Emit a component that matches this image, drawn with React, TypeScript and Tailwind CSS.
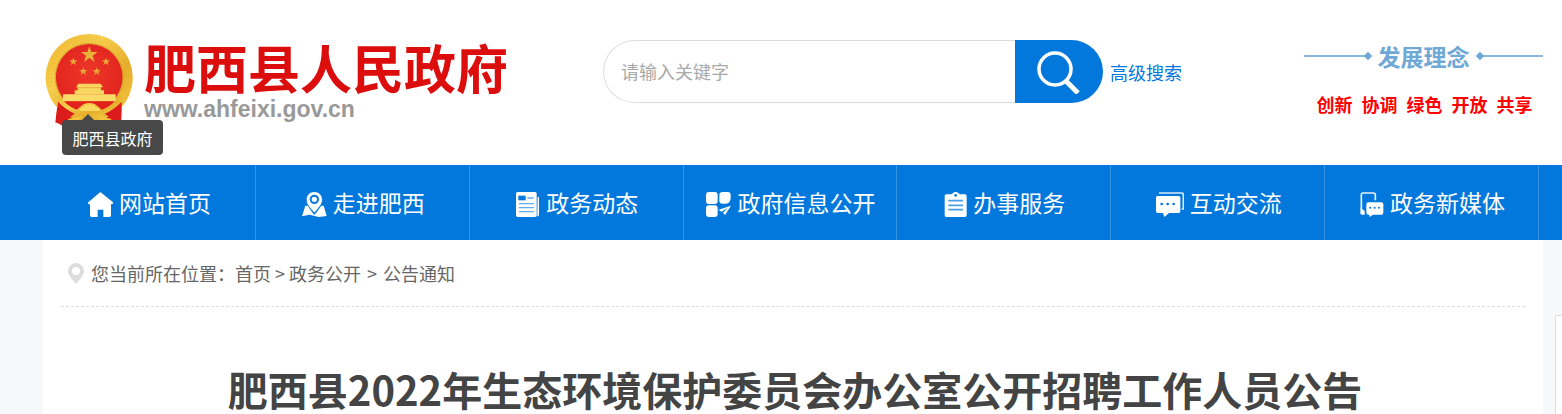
import {ReactNode} from "react";

const Emblem = () => (
 <svg viewBox="45 41 264 282" className="w-[88px] h-[94px] shrink-0" aria-hidden="true">
  <defs>
   <linearGradient id="gold" x1="0" y1="0" x2="1" y2="1">
    <stop offset="0" stopColor="#efb52c" />
    <stop offset="0.35" stopColor="#f6cf4d" />
    <stop offset="0.65" stopColor="#e6ae2c" />
    <stop offset="1" stopColor="#f5cd48" />
   </linearGradient>
   <radialGradient id="red" cx="0.5" cy="0.45" r="0.6">
    <stop offset="0" stopColor="#ee3628" />
    <stop offset="1" stopColor="#e0231e" />
   </radialGradient>
  </defs>
  <path d="M84 240 76 306 98 314 120 322H238L273 318 275 240Z" fill="#d81a1a" />
  <circle cx="177.5" cy="172" r="131" fill="url(#gold)" />
  <circle cx="177.5" cy="172" r="116" fill="none" stroke="#d9971c" strokeWidth="24" strokeDasharray="3 9" opacity="0.12" />
  <circle cx="177.5" cy="171" r="102" fill="none" stroke="#c98a1a" strokeWidth="3" opacity="0.6" />
  <circle cx="177.5" cy="171" r="100" fill="url(#red)" />
  <path
   d="M178 78 184 95H203L188 106 194 125 178 113 162 125 168 106 153 95H172Z"
   fill="#e9b03a"
  />
  {[
   [130, 124],
   [228, 124],
   [160, 153],
   [200, 153],
  ].map(([x, y]) => (
   <path
    key={`${x}-${y}`}
    transform={`translate(${x} ${y})`}
    d="M0-12 3-4H12L5 2 8 11 0 5-8 11-5 2-12-4H-3Z"
    fill="#e9a836"
   />
  ))}
  <path d="M145 190H212L219 201H213V210H222V222H134V210H143V201H138Z" fill="#f9d562" />
  <path d="M143 202H213" stroke="#e39a2c" strokeWidth="2" />
  <path d="M99 222H257V243H99Z" fill="#fbdb67" />
  <path d="M87 218 99 243H257L268 218V262Q225 292 178 292 130 292 87 262Z" fill="url(#gold)" />
  <path d="M102 243H254Q240 259 216 268L196 252Q178 244 160 252L140 268Q116 259 102 243Z" fill="#e2211d" />
  <path d="M148 272 154 258 162 260 167 251 174 255 180 249 186 255 193 252 197 261 205 260 210 272Z" fill="#fbd95c" />
  <path d="M84 244Q104 266 134 280L111 296 106 322 78 304Z" fill="#dc1b1b" />
  <path d="M275 244Q252 268 224 280L246 296 252 322 273 318Z" fill="#dc1b1b" />
  <path d="M113 296 156 286 143 308H124Z" fill="#f5c33b" />
  <path d="M245 296 202 286 215 308H234Z" fill="#f5c33b" />
 </svg>
);

const icons: Record<string, ReactNode> = {
 home: (
  <svg viewBox="84 81 75 75" className="w-[25px] h-[25px]" fill="#fff">
   <path d="M121 81 159 112Q160 118 153 118V151Q153 156 148 156H130V134H113V156H95Q90 156 90 151V118H86Q83 116 85 112Z" />
  </svg>
 ),
 map: (
  <svg viewBox="725 81 75 75" className="w-[25px] h-[25px]" fill="#fff">
   <path d="M735 122H742L759 147Q762 150 765 147L783 122H790L799 153 775 156 748 149 725 154Z" />
   <path
    d="M762 80C748 80 738 91 738 104 738 120 752 131 762 144 772 131 786 120 786 104 786 91 776 80 762 80Z"
    stroke="#0278dc"
    strokeWidth="2"
   />
   <circle cx="762" cy="103" r="11" fill="none" stroke="#0278dc" strokeWidth="6" />
  </svg>
 ),
 news: (
  <svg viewBox="168 81 72 75" className="w-[24px] h-[25px]" fill="#fff">
   <rect x="168" y="81" width="62" height="75" rx="5" />
   <path d="M233 96H237V148Q237 153 232 155Z" />
   <path d="M175 92H197V106H175Z" fill="#0278dc" />
   <path d="M202 99H221M177 116H222M177 128H222M177 140H222" stroke="#64aceb" strokeWidth="4" />
  </svg>
 ),
 grid: (
  <svg viewBox="738 81 75 75" className="w-[25px] h-[25px]" fill="#fff">
   <rect x="738" y="81" width="35" height="36" rx="9" />
   <path d="M788 81H803Q812 81 812 90V98Q812 116 794 116H788Q778 116 778 107V90Q778 81 788 81Z" />
   <rect x="738" y="121" width="35" height="35" rx="9" />
   <path d="M776 134 813 122 795 150 789 143 803 129 784 140Z" />
  </svg>
 ),
 clipboard: (
  <svg viewBox="160 81 69 75" className="w-[23px] h-[25px]" fill="#fff">
   <path d="M167 88H181L187 85Q189 81 195 81 201 81 203 85L209 88H223Q228 88 228 93V151Q228 156 223 156H167Q162 156 162 151V93Q162 88 167 88Z" />
   <circle cx="195" cy="91" r="4" fill="#0278dc" />
   <path d="M173 107H217M173 121H217M173 134H217" stroke="#4b9fe6" strokeWidth="5" />
  </svg>
 ),
 chat: (
  <svg viewBox="795 81 84 75" className="w-[28px] h-[25px]" fill="#fff">
   <path d="M804 84H872Q877 84 877 89V132H872" fill="none" stroke="#fff" strokeWidth="5" opacity="0.85" />
   <path d="M800 93H863Q868 93 868 98V139Q868 144 863 144H834L820 156 816 144H800Q795 144 795 139V98Q795 93 800 93Z" />
   <circle cx="812" cy="117" r="4" fill="#0278dc" />
   <circle cx="830" cy="117" r="4" fill="#0278dc" />
   <circle cx="848" cy="117" r="4" fill="#0278dc" />
  </svg>
 ),
 mobile: (
  <svg viewBox="208 81 72 75" className="w-[24px] h-[25px]" fill="#fff">
   <path d="M254 106V90Q254 84 248 84H217Q212 84 212 89V147" fill="none" stroke="#fff" strokeWidth="5" opacity="0.9" />
   <path d="M210 128 222 138V149H214Q210 149 210 145Z" />
   <path d="M233 112H272Q278 112 278 118V143Q278 149 272 149H247L237 156 236 149H233Q227 149 227 143V118Q227 112 233 112Z" />
   <circle cx="239" cy="128" r="3" fill="#0278dc" />
   <circle cx="252" cy="128" r="3" fill="#0278dc" />
   <circle cx="265" cy="128" r="3" fill="#0278dc" />
  </svg>
 ),
};

const navItems = [
 {label: "网站首页", icon: "home"},
 {label: "走进肥西", icon: "map"},
 {label: "政务动态", icon: "news"},
 {label: "政府信息公开", icon: "grid"},
 {label: "办事服务", icon: "clipboard"},
 {label: "互动交流", icon: "chat"},
 {label: "政务新媒体", icon: "mobile"},
];

const ideas = ["创新", "协调", "绿色", "开放", "共享"];

function Header() {
 return (
  <header className="flex items-start h-[165px] pl-[45px] pr-[19px] bg-white">
   <a href="#" className="relative flex w-[558px] shrink-0 pt-[34px]">
    <Emblem />
    <span className="flex flex-col pl-[11px] pt-[6px]">
     <span className="text-[52px] leading-[54px] font-bold text-[#dc0d0d] whitespace-nowrap">
      肥西县人民政府
     </span>
     <span className="text-[23px] leading-[30px] font-bold text-[#999] font-['Liberation_Sans',sans-serif]">
      www.ahfeixi.gov.cn
     </span>
    </span>
    <span
     role="tooltip"
     className="absolute left-[17px] top-[120px] flex items-center justify-center w-[101px] h-[35px] rounded bg-[#484848] text-base text-white">
     <span className="absolute left-5 -top-[6px] border-x-6 border-b-6 border-x-transparent border-b-[#484848]" />
     肥西县政府
    </span>
   </a>

   <form className="flex items-center pt-10" onSubmit={(e) => e.preventDefault()}>
    <input
     type="text"
     aria-label="请输入关键字"
     placeholder="请输入关键字"
     className="w-[412px] h-[63px] pl-[17px] pb-[2px] rounded-l-full border border-r-0 border-[#ddd] text-lg text-[#444] placeholder:text-[#a9a9a9] outline-none"
    />
    <button
     type="submit"
     aria-label="搜索"
     className="flex items-center justify-center w-[88px] h-[63px] rounded-r-full bg-[#0278dc]">
     <svg viewBox="0 0 44 44" className="w-11 h-11" fill="none" stroke="#fff">
      <circle cx="18" cy="19" r="16" strokeWidth="3.5" />
      <path d="M29 31 41 43" strokeWidth="5" />
     </svg>
    </button>
    <a href="#" className="pl-[7px] text-lg text-[#0278dc] whitespace-nowrap">
     高级搜索
    </a>
   </form>

   <div className="flex flex-col w-[239px] ml-auto pt-[39px] shrink-0">
    <div className="flex items-center text-[#6fa8d6]">
     <span className="flex-1 h-[2px] bg-[#8ab8de]" />
     <span className="w-[6px] h-[6px] rotate-45 bg-[#6fa8d6]" />
     <span className="px-[7px] text-[23px] leading-[34px] font-bold">发展理念</span>
     <span className="w-[6px] h-[6px] rotate-45 bg-[#6fa8d6]" />
     <span className="flex-1 h-[2px] bg-[#8ab8de]" />
    </div>
    <div className="flex justify-center gap-[9px] pt-[19px] pl-[2px] text-lg leading-6 font-bold text-[#fe0000]">
     {ideas.map((idea) => (
      <span key={idea}>{idea}</span>
     ))}
    </div>
   </div>
  </header>
 );
}

function Nav() {
 return (
  <nav className="bg-[#0278dc] pl-[42px] pr-[23px]">
   <ul className="grid grid-cols-7">
    {navItems.map(({label, icon}) => (
     <li key={label} className="border-r border-[#3594e4]">
      <a
       href="#"
       className="flex items-center justify-center gap-[6px] h-[75px] pl-[2px] pb-[2px] text-[23px] leading-8 text-white whitespace-nowrap">
       <span className="pt-[6px]">{icons[icon]}</span>
       {label}
      </a>
     </li>
    ))}
   </ul>
  </nav>
 );
}

export default function App() {
 return (
  <div className="flex flex-col min-h-screen overflow-hidden bg-[#f7f8fa] font-['Noto_Sans_CJK_SC',sans-serif]">
   <Header />
   <Nav />
   <div className="flex flex-1 pl-[43px]">
    <main className="flex-1 px-[18px] bg-white">
     <div className="flex items-center h-[67px] pl-[7px] border-b border-dashed border-[#ddd] text-lg text-[#666]">
      <svg viewBox="0 0 16 21" className="w-4 h-[21px] mr-[7px]" fill="#ddd">
       <path
        fillRule="evenodd"
        d="M8 0a8 8 0 0 1 8 8c0 5-5 9-8 13C5 17 0 13 0 8a8 8 0 0 1 8-8Zm0 4a4 4 0 1 0 0 8 4 4 0 0 0 0-8Z"
       />
      </svg>
      <span>您当前所在位置：</span>
      <a href="#">首页</a>
      <span className="px-1">&gt;</span>
      <a href="#">政务公开</a>
      <span className="px-[6px]">&gt;</span>
      <a href="#">公告通知</a>
     </div>
     <h1 className="mt-14 pl-1 text-center text-[40px] leading-[52px] font-bold text-[#444]">
      肥西县2022年生态环境保护委员会办公室公开招聘工作人员公告
     </h1>
    </main>
    <aside className="flex w-[19px] pl-3 pt-[75px]">
     <div className="flex-1 border-l border-t border-[#ddd] bg-white" />
    </aside>
   </div>
  </div>
 );
}
